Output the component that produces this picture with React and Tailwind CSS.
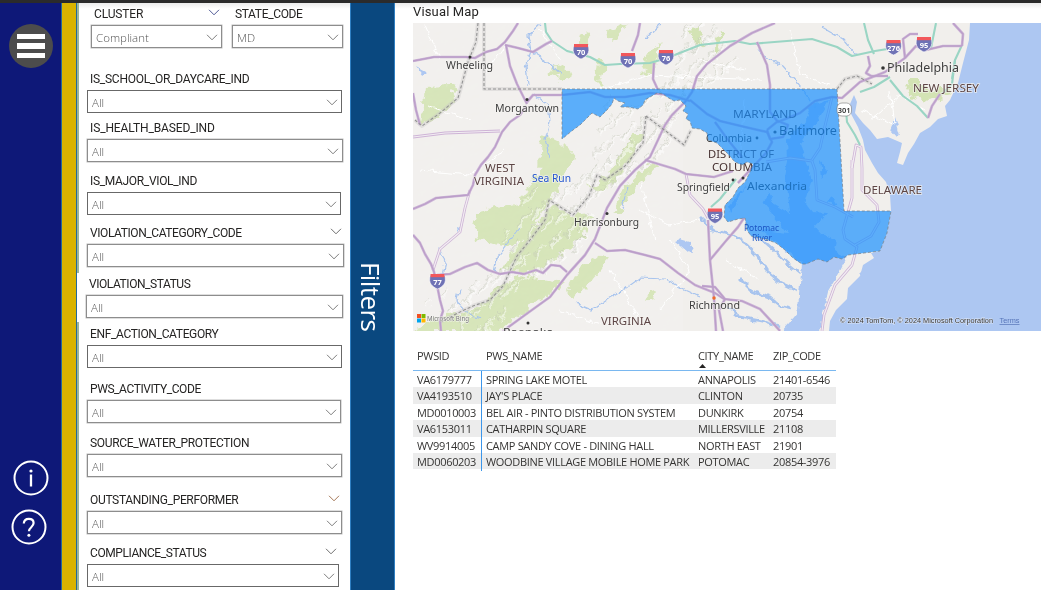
import React from "react";

const FILTERS = [
  { label: "IS_SCHOOL_OR_DAYCARE_IND", gap: "mt-[22px]", width: "w-[255px]", track: "tracking-[-0.27px]" },
  { label: "IS_HEALTH_BASED_IND", gap: "mt-[7px]", width: "w-[256px]", track: "tracking-[-0.13px]", soft: true },
  { label: "IS_MAJOR_VIOL_IND", gap: "mt-[11px]", width: "w-[254px]", track: "tracking-[-0.33px]" },
  { label: "VIOLATION_CATEGORY_CODE", gap: "mt-[10px]", width: "w-[257px]", track: "tracking-[-0.42px]", soft: true, chevron: "text-[#666]", pad: "pr-[2px]" },
  { label: "VIOLATION_STATUS", gap: "mt-[9px]", width: "w-[257px]", track: "tracking-[-0.44px]", soft: true, shift: "-ml-[1px]" },
  { label: "ENF_ACTION_CATEGORY", gap: "mt-[8px]", width: "w-[255px]", track: "tracking-[-0.35px]" },
  { label: "PWS_ACTIVITY_CODE", gap: "mt-[13px]", width: "w-[254px]", track: "tracking-[-0.42px]", soft: true },
  { label: "SOURCE_WATER_PROTECTION", gap: "mt-[12px]", width: "w-[255px]", track: "tracking-[-0.33px]", soft: true },
  { label: "OUTSTANDING_PERFORMER", gap: "mt-[15px]", width: "w-[255px]", track: "tracking-[-0.33px]", soft: true, chevron: "text-[#a0714f]", pad: "pr-[2px]" },
  { label: "COMPLIANCE_STATUS", gap: "mt-[11px]", width: "w-[252px]", track: "tracking-[-0.42px]", chevron: "text-[#666]", pad: "pr-[2px]" },
];

function Chevron({ className = "" }) {
  return (
    <svg className={className} width="12" height="7" viewBox="0 0 12 7" fill="none" stroke="currentColor" strokeWidth="0.95">
      <path d="M1 .8 6 5.8 11 .8" />
    </svg>
  );
}

function Select({ value, soft, className = "" }) {
  const edge = soft
    ? "border-[#8d8d8d] shadow-[0_0_0_0.5px_#bdbdbd]"
    : "border-[#686868]";
  return (
    <div className={`flex h-[23px] items-center justify-between border pl-1 pr-[3px] ${edge} ${className}`}>
      <span className="pt-[2px] text-[11.5px] font-light leading-none text-[#555]">{value}</span>
      <Chevron className="mt-px text-[#777]" />
    </div>
  );
}

function Filter({ label, gap, width, track, soft, chevron, pad = "", shift = "" }) {
  return (
    <div className={`${gap} ${width} ${shift} shrink-0`}>
      <div className={`flex h-4 items-center justify-between pl-[3px] ${pad}`}>
        <span className={`text-[12px] leading-4 text-[#252423] ${track}`}>{label}</span>
        {chevron && <Chevron className={`-mt-1 ${chevron}`} />}
      </div>
      <Select value="All" soft={soft} className="mt-[3px] font-['Open_Sans',sans-serif]" />
    </div>
  );
}

const PURPLE_ROADS = [
  "M413 61 434 57 466 57 475 58 486 52 497 49 505 42 513 31 518 23",
  "M505 45 518 48 533 52 546 44 552 41",
  "M506 45 510 66 517 84 527 104",
  "M527 102 533 95 562 95 590 92 605 97 625 97 650 93 670 95 690 101",
  "M526 106 520 115 510 122 502 132 495 147 488 157 481 165 475 175 473 185 468 195 436 198 425 204 413 209",
  "M413 235 420 243 425 254 431 264 434 272 437 285 440 300 443 311 440 320 441 331",
  "M437 275 450 274 465 267 477 263 488 270 500 274 512 272 524 274 536 270 543 273 551 265 560 266 567 272",
  "M503 331 525 315 550 297 567 275 585 255 595 239 607 208 620 186 635 170 650 157 665 125 672 115 685 102 692 92 697 76 707 64 730 46 752 33 775 23",
  "M595 243 607 251 625 250 645 255 660 259 678 273 695 285 715 293 724 299 742 301 760 309 772 322 780 331",
  "M640 23 638 35 632 51",
  "M654 63 653 79 658 90",
  "M757 42 767 65 770 85 770 112 778 122 800 113 815 101 832 97 842 98 860 82 885 72 905 58 916 46 926 50 943 46 962 46",
  "M690 100 707 114 720 121 745 127 767 132 772 142 766 153 750 170 738 183",
  "M715 122 728 140 742 157",
  "M708 220 709 240 710 260 714 298 716 331",
  "M710 260 725 242 738 227 744 218",
  "M645 160 675 169 686 174 714 177 733 171",
  "M767 130 778 121 788 125 783 137 770 139 767 130",
  "M702 286 715 287 725 299 719 310 723 331",
  "M868 56 870 66 866 73 871 76 888 76",
  "M953 23 963 34 962 46",
  "M940 94 932 106 928 118",
  "M905 58 903 39 910 34 918 34",
  "M413 93 416 110 420 125",
];
const MINOR_ROADS = [
  "M413 137 445 133 500 131",
  "M470 190 465 208 460 232 440 249 433 270",
  "M852 160 852 198 843 230 845 239 857 247 852 265 835 285 824 315 822 331",
  "M862 168 862 190 877 205 879 222 871 236 855 245",
  "M852 168 856 145 861 147 862 168",
  "M686 174 690 195 703 209 708 218",
  "M766 162 790 158 812 161 815 170 817 200 835 207 853 217",
  "M832 97 824 130 820 148 812 160",
];
const GREEN_ROADS = [
  "M545 23 546 32 552 41 567 51 590 57 605 65 620 64 650 63 667 58 700 45 735 41 750 44 812 39 837 47 852 56 875 51 900 47",
  "M864 23 868 40 874 54",
  "M936 23 931 48",
  "M962 45 955 60 952 79",
  "M955 60 952 84 942 94",
  "M846 110 847 122 855 135 860 145",
  "M890 80 903 96 917 106 928 118",
  "M860 92 874 87 890 77",
  "M711 207 720 199 736 179",
];
const FORESTS = [
  "M424 86 452 85 457 97 440 118 420 125Z",
  "M540 133 552 140 573 150 570 168 548 203 528 236 510 246 477 240 474 226 479 211 520 202 538 170Z",
  "M556 206 570 217 592 215 582 238 558 258 535 273 500 270 514 248 535 226Z",
  "M590 186 605 178 634 134 645 134 618 178 600 192Z",
  "M613 212 625 186 652 160 655 168 634 190 620 212Z",
  "M494 292 520 274 564 282 549 293 520 315 500 331 413 331 440 316 470 312Z",
  "M567 290 578 268 600 255 611 258 594 278 576 298Z",
  "M555 65 570 69 574 79 562 80 550 75Z",
  "M580 33 590 36 586 50 578 48Z",
  "M605 37 612 28 625 23 626 29 614 44Z",
  "M642 65 649 53 662 40 656 60 647 79Z",
  "M907 80 922 80 930 91 946 87 950 96 928 101 910 96Z",
  "M690 30 698 28 705 45 696 49Z",
  "M648 295 657 289 654 300 646 303Z",
  "M720 32 712 50 716 52 724 34Z",
  "M598 60 604 62 600 84 596 80Z",
];
const RIVERS = [
  "M541 23 528 35 531 51 526 66 528 85",
  "M533 53 550 64 562 75",
  "M533 95 548 105 550 122 545 140 550 158",
  "M440 248 445 263 442 275",
  "M460 288 457 300 465 312 480 318",
  "M520 227 510 240 497 257 494 273",
  "M575 303 592 310 606 300 625 289 640 278 665 279 680 288 700 297",
  "M755 44 768 60 783 66 797 82 807 95 815 108",
  "M823 28 844 40 856 54",
  "M628 186 622 204 626 210",
  "M660 25 645 39",
];
const ESTUARIES = [
  "M700 218 713 230 732 235 747 244 758 256 766 270 780 282 797 290",
  "M738 277 752 291 770 298 780 306 792 309",
  "M727 307 740 317 762 321 780 327",
  "M757 236 775 252 790 266 800 274",
];
const BORDERS = [
  "M484 23V89H562",
  "M478 23 476 42 468 62 463 80 458 98 440 113 422 126 415 120",
  "M837 89 845 79 857 76 872 84",
  "M646 116 684 145 691 130",
  "M646 116 643 143 625 166 605 180 597 175 589 196 573 215 549 200 545 220 530 240 517 256 503 286 490 300 473 306 462 311 440 322",
];
const STATE =
  "M562 89H837L844 211H891L887 233 880 251 848 255 842 259 834 257 827 262 818 259 806 264 802 264 793 258 785 250 776 243 768 240 760 238 751 236 747 230 745 218 738 219 728 222 724 217 725 205 733 197 738 188 745 182 750 172 753 164 747 162 742 165 735 162 727 153 717 143 708 140 707 133 700 129 692 128 690 121 686 119 688 114 683 111 686 106 680 100 674 101 667 97 663 94 657 93 650 97 645 100 643 105 638 109 628 107 620 107 625 103 618 101 614 98 612 104 607 110 600 117 592 113 587 118 580 125 573 130 562 139Z";

function Shield({ x, y, n }) {
  return (
    <g>
      <path d={`M${x - 7} ${y - 6}H${x + 7}C${x + 10} ${y + 2} ${x + 5} ${y + 6} ${x} ${y + 8}C${x - 5} ${y + 6} ${x - 10} ${y + 2} ${x - 7} ${y - 6}Z`} fill="#6f72b5" stroke="#fff" strokeWidth=".6" />
      <path d={`M${x - 7} ${y - 7}H${x + 7}V${y - 3.8}H${x - 7}Z`} fill="#f2585b" />
      <text x={x} y={y + 3.6} fontSize="7.5" fontWeight="700" fill="#fff" textAnchor="middle">{n}</text>
    </g>
  );
}

function Label({ x, y, w, size = 11, fill = "#3e3e3e", halo = true, children }) {
  return (
    <text x={x} y={y} textLength={w} lengthAdjust="spacingAndGlyphs" fontSize={size} fill={fill} stroke={halo ? "#f6f4f1" : "none"} strokeWidth="1.6" strokeOpacity=".75" paintOrder="stroke">
      {children}
    </text>
  );
}

const RIDGES = Array.from({ length: 190 }, (_, i) => {
  const t = (i * 37) % 190;
  const x = 425 + t * 1.38 + ((i * 53) % 60);
  const y = 324 - t * 1.54 + ((i * 29) % 62) - 20;
  const len = 6 + ((i * 17) % 13);
  return `M${x} ${y}l${len * 0.75} ${-len}`;
}).join("");

function MapView() {
  return (
    <svg className="block h-[308px] w-[628px] font-['Noto_Sans',sans-serif]" viewBox="413 23 628 308">
      <defs>
        <filter id="rough" x="-5%" y="-5%" width="110%" height="110%">
          <feTurbulence type="fractalNoise" baseFrequency=".11" numOctaves="3" seed="4" result="n" />
          <feDisplacementMap in="SourceGraphic" in2="n" scale="13" xChannelSelector="R" yChannelSelector="G" />
        </filter>
        <filter id="shore" x="-5%" y="-5%" width="110%" height="110%">
          <feTurbulence type="fractalNoise" baseFrequency=".14" numOctaves="2" seed="8" result="n" />
          <feDisplacementMap in="SourceGraphic" in2="n" scale="7" xChannelSelector="R" yChannelSelector="G" />
        </filter>
        <filter id="relief" x="0" y="0" width="100%" height="100%">
          <feTurbulence type="fractalNoise" baseFrequency=".07 .09" numOctaves="4" seed="12" />
          <feDiffuseLighting surfaceScale="1.6" lightingColor="#fff">
            <feDistantLight azimuth="225" elevation="62" />
          </feDiffuseLighting>
        </filter>
      </defs>
      <rect x="413" y="23" width="628" height="308" fill="#f1efec" />
      <g fill="#d3e3b4" filter="url(#rough)">{FORESTS.map((d) => <path key={d} d={d} />)}</g>
      <rect x="413" y="23" width="270" height="308" filter="url(#relief)" opacity=".2" style={{ mixBlendMode: "soft-light" }} />
      <g filter="url(#rough)">
        <path d={RIDGES} stroke="#bfc4b4" strokeWidth="1" opacity=".45" />
        <path d={RIDGES} stroke="#fff" strokeWidth="1.2" opacity=".5" transform="translate(2 1)" />
      </g>
      <g fill="#adc7f2">
        <path d="M970 23 969 40 963 63 958 83 950 100 945 106 947 116 938 119 930 127 920 133 914 144 908 153 903 165 897 163 900 152 902 143 888 137 877 139 870 130 863 123 855 113 857 102 854 95 850 104 850 112 858 127 863 140 865 150 872 163 878 173 886 182 890 195 891 211 887 233 880 251 871 253 874 258 863 265 860 276 848 288 847 299 836 310 830 321 829 331H1041V23Z" />
        <g filter="url(#shore)">
          <path d="M830 100 807 107 810 117 795 130 787 140 788 160 784 183 788 193 790 213 773 203 768 193 763 203 777 220 787 233 762 230 777 243 802 263 801 275 800 284 799 294 798 312 790 322 780 333H820L823 312 828 292 840 272 847 258 835 250 837 240 820 233 815 227 827 213 812 212 805 203 812 180 805 160 800 143 818 120Z" />
          <path d="M680 239 690 242 694 253 688 252 675 241ZM416 67 427 73 423 76ZM457 228 461 229 459 234ZM890 130 895 118 900 134 897 138ZM858 275 866 267 863 275Z" />
          <path d="M742 190 746 186 736 205 730 214 728 206ZM820 160 828 170 822 178ZM832 196 838 206 828 202Z" />
        </g>
      </g>
      <g fill="none" stroke="#a8c4ee" filter="url(#shore)">
        {RIVERS.map((d) => <path key={d} d={d} strokeWidth="1.2" />)}
        {ESTUARIES.map((d) => <path key={d} d={d} strokeWidth="2.8" />)}
      </g>
      <path
        d="M600 90 650 75 760 80M700 60 745 70M870 120 900 95 925 110M640 210 670 225 700 220M670 240 690 270 660 310M725 260 760 280M505 45 484 75M420 170 470 175 505 150M610 270 640 320M745 100 740 160M860 110 895 125M540 30 560 60M425 25 440 60M425 105 470 120M790 30 800 75 830 85M890 90 895 125M640 180 655 240M560 310 600 325"
        fill="none" stroke="#fff" strokeWidth="1" filter="url(#shore)"
      />
      <g fill="none" strokeLinejoin="round">
        {BORDERS.map((d) => <path key={d} d={d} stroke="#c8c6c6" strokeWidth="4" opacity=".4" />)}
        {MINOR_ROADS.map((d) => <path key={d} d={d} stroke="#ceb4d6" strokeWidth="2.8" />)}
        {MINOR_ROADS.map((d) => <path key={d} d={d} stroke="#f3eef3" strokeWidth="1.2" />)}
        {GREEN_ROADS.map((d) => <path key={d} d={d} stroke="#9ad5c4" strokeWidth="2.1" />)}
        {PURPLE_ROADS.map((d) => <path key={d} d={d} stroke="#cdb6d7" strokeWidth="2.7" />)}
        {PURPLE_ROADS.map((d) => <path key={d} d={d} stroke="#bb9ec9" strokeWidth="1.3" />)}
        {BORDERS.map((d) => <path key={d} d={d} stroke="#929292" strokeWidth="1.1" strokeDasharray="3 2" />)}
      </g>
      <g fill="#333">
        <circle cx="470" cy="57" r="1.5" /><circle cx="527" cy="99.5" r="1.5" />
        <circle cx="883" cy="68" r="1.8" /><circle cx="775" cy="132" r="1.6" />
        <circle cx="757" cy="138" r="1.4" /><circle cx="733" cy="180" r="1.4" />
        <circle cx="743" cy="178" r="1.5" /><circle cx="607" cy="213.5" r="1.5" />
        <circle cx="528" cy="323" r="1.5" />
      </g>
      <circle cx="714" cy="298" r="1.7" fill="#f26b2b" />
      <Label x="446" y="69" w="47">Wheeling</Label>
      <Label x="495" y="111.5" w="64">Morgantown</Label>
      <Label x="887" y="72" w="72" size="12.5">Philadelphia</Label>
      <Label x="779" y="135" w="58" size="12.5" fill="#222" halo={false}>Baltimore</Label>
      <Label x="706" y="141.5" w="46" size="10.5" fill="#222" halo={false}>Columbia</Label>
      <Label x="677" y="190.5" w="53">Springfield</Label>
      <Label x="747" y="190" w="60" size="11.5" fill="#222" halo={false}>Alexandria</Label>
      <Label x="574" y="226" w="65">Harrisonburg</Label>
      <Label x="689" y="309" w="51">Richmond</Label>
      <Label x="503" y="336" w="50">Roanoke</Label>
      <Label x="485" y="172" w="30" fill="#5d4545">WEST</Label>
      <Label x="474" y="185" w="50" fill="#5d4545">VIRGINIA</Label>
      <Label x="733" y="118" w="64" fill="#3c2a2a" halo={false}>MARYLAND</Label>
      <Label x="708" y="157.5" w="66" fill="#453030" halo={false}>DISTRICT OF</Label>
      <Label x="712" y="170.5" w="60" fill="#453030" halo={false}>COLUMBIA</Label>
      <Label x="913" y="92" w="66" fill="#5d4545">NEW JERSEY</Label>
      <Label x="863" y="193.5" w="59" fill="#5d4545">DELAWARE</Label>
      <Label x="601" y="324.5" w="50" fill="#5d4545">VIRGINIA</Label>
      <path d={STATE} fill="#1b91ff" fillOpacity=".7" />
      <path d={STATE} fill="none" stroke="#76808a" strokeWidth=".9" strokeDasharray="3 2" opacity=".8" />
      <Label x="532" y="182" w="39" size="10" fill="#2656cf">Sea Run</Label>
      <text x="744" y="231" textLength="35" fontSize="8.5" fill="#1c55c4">Potomac</text>
      <text x="752" y="240.5" textLength="20" lengthAdjust="spacingAndGlyphs" fontSize="8.5" fill="#1c55c4">River</text>
      <Shield x={581} y={51} n="70" />
      <Shield x={628} y={60} n="70" />
      <Shield x={666} y={57} n="76" />
      <Shield x={893.5} y={47} n="276" />
      <Shield x={924} y={44} n="95" />
      <Shield x={715} y={215.5} n="95" />
      <Shield x={437.5} y={281} n="77" />
      <rect x="837" y="103" width="14.5" height="13" rx="5" fill="#fff" stroke="#777" strokeWidth=".6" />
      <text x="844.2" y="112.5" fontSize="7.5" fontWeight="600" fill="#333" textAnchor="middle">301</text>
      <path d="M417 314h4v4h-4z" fill="#f25022" />
      <path d="M421.5 314h4v4h-4z" fill="#7fba00" />
      <path d="M417 318.5h4v4h-4z" fill="#00a4ef" />
      <path d="M421.5 318.5h4v4h-4z" fill="#ffb900" />
      <text x="427" y="321" textLength="42" lengthAdjust="spacingAndGlyphs" fontSize="7" fill="#777" stroke="#f4f4f0" strokeWidth="1" paintOrder="stroke">Microsoft Bing</text>
      <text x="840" y="323" textLength="153" lengthAdjust="spacingAndGlyphs" fontFamily="Liberation Sans, sans-serif" fontSize="7" fill="#333" stroke="#dce6f7" strokeWidth="1" paintOrder="stroke">© 2024 TomTom, © 2024 Microsoft Corporation</text>
      <text x="999.5" y="323" textLength="20" lengthAdjust="spacingAndGlyphs" fontFamily="Liberation Sans, sans-serif" fontSize="7" fill="#5674b8" textDecoration="underline">Terms</text>
    </svg>
  );
}

const ROWS = [
  ["VA6179777", "SPRING LAKE MOTEL", "ANNAPOLIS", "21401-6546"],
  ["VA4193510", "JAY'S PLACE", "CLINTON", "20735"],
  ["MD0010003", "BEL AIR - PINTO DISTRIBUTION SYSTEM", "DUNKIRK", "20754"],
  ["VA6153011", "CATHARPIN SQUARE", "MILLERSVILLE", "21108"],
  ["WV9914005", "CAMP SANDY COVE - DINING HALL", "NORTH EAST", "21901"],
  ["MD0060203", "WOODBINE VILLAGE MOBILE HOME PARK", "POTOMAC", "20854-3976"],
];

function DataTable() {
  const cols = "grid grid-cols-[69px_212px_75px_67px]";
  return (
    <div className="mt-[15px] w-[423px] whitespace-nowrap font-['Open_Sans',sans-serif] text-[11px] tracking-[-0.32px] text-[#353433]">
      <div className={`${cols} h-[25px] border-b border-[#7ab8f0] leading-5`}>
        <span className="pl-1">PWSID</span>
        <span className="pl-1">PWS_NAME</span>
        <span className="relative pl-1">
          CITY_NAME
          <svg className="absolute left-[5px] top-[18px]" width="7" height="4" viewBox="0 0 7 4"><path d="M0 4 3.5 0 7 4Z" fill="#252423" /></svg>
        </span>
        <span className="pl-1">ZIP_CODE</span>
      </div>
      {ROWS.map((r, i) => (
        <div key={r[0]} className={`${cols} h-[16.4px] leading-[18px] ${i % 2 ? "bg-[#ececec]" : ""}`}>
          <span className="border-r border-[#3c96ea] pl-1">{r[0]}</span>
          <span className="pl-1">{r[1]}</span>
          <span className="pl-1">{r[2]}</span>
          <span className="pl-1">{r[3]}</span>
        </div>
      ))}
    </div>
  );
}

export default function App() {
  return (
    <div className="flex h-[590px] w-[1041px] flex-col overflow-hidden bg-white font-['Roboto',sans-serif]">
      <div className="h-[3px] shrink-0 bg-[#2b2b2b]" />
      <div className="flex min-h-0 flex-1">
        <nav className="flex w-[61px] flex-col items-center bg-[#0e1878] pt-[21px]">
          <button className="flex size-11 flex-col items-center justify-center gap-1 rounded-full bg-[#4c4c4c]">
            <span className="h-[5.5px] w-7 bg-white" />
            <span className="h-[5.5px] w-7 bg-white" />
            <span className="h-[5.5px] w-7 bg-white" />
          </button>
          <svg className="mt-[392px] shrink-0" width="36" height="36" viewBox="0 0 36 36">
            <circle cx="18" cy="18" r="16.5" fill="none" stroke="#fff" strokeWidth="2" />
            <path d="M18 14.5V26.5" stroke="#fff" strokeWidth="2.3" />
            <circle cx="18" cy="11" r="1.6" fill="#fff" />
          </svg>
          <svg className="mr-[3px] mt-[13px] shrink-0" width="36" height="36" viewBox="0 0 36 36">
            <circle cx="18" cy="18" r="16.5" fill="none" stroke="#fff" strokeWidth="2" />
            <path d="M12.8 14.5c.2-3.2 2.3-4.7 5-4.7 3 0 4.8 1.700 4.8 4.300 0 4-4.700 4.200-4.700 8.200" fill="none" stroke="#fff" strokeWidth="2.2" />
            <circle cx="17.9" cy="26.3" r="1.5" fill="#fff" />
          </svg>
        </nav>
        <div className="w-4 border-x border-[#23699a] bg-[#d9b300]" />
        <div className="flex w-[2px] flex-col bg-[#9bb59a]">
          <div className="mt-[270px] h-[49px] bg-white" />
        </div>
        <aside className="flex w-[271px] flex-col bg-[linear-gradient(#ebebeb,#fff_6px)] pl-2 pt-[3px]">
          <div className="flex h-[43px] shrink-0 gap-[10px] pl-1">
            <div className="w-[131px]">
              <div className="flex h-4 items-center justify-between pl-[3px] pr-[2px]">
                <span className="text-[12px] leading-4 tracking-[-0.15px] text-[#252423]">CLUSTER</span>
                <Chevron className="-mt-[3px] text-[#46508f]" />
              </div>
              <Select value="Compliant" soft className="mt-[3px] font-['Open_Sans',sans-serif]" />
            </div>
            <div className="w-[111px]">
              <div className="flex h-4 items-center pl-[3px]">
                <span className="text-[12px] leading-4 tracking-[-0.35px] text-[#252423]">STATE_CODE</span>
              </div>
              <Select value="MD" soft className="mt-[3px] font-['Open_Sans',sans-serif]" />
            </div>
          </div>
          {FILTERS.map((f) => <Filter key={f.label} {...f} />)}
        </aside>
        <div className="flex w-[45px] items-center justify-center border-x border-[#2f7fc2] bg-[#0a487f]">
          <span className="mr-1 font-['Open_Sans',sans-serif] text-[26px] leading-none tracking-[-0.6px] text-white [writing-mode:vertical-rl]">Filters</span>
        </div>
        <main className="flex flex-1 flex-col bg-[linear-gradient(#ebebeb,#fff_6px)] pl-[18px]">
          <h1 className="h-5 text-[13px] leading-[17px] tracking-[0.15px] text-[#252423]">Visual Map</h1>
          <MapView />
          <DataTable />
        </main>
      </div>
    </div>
  );
}
